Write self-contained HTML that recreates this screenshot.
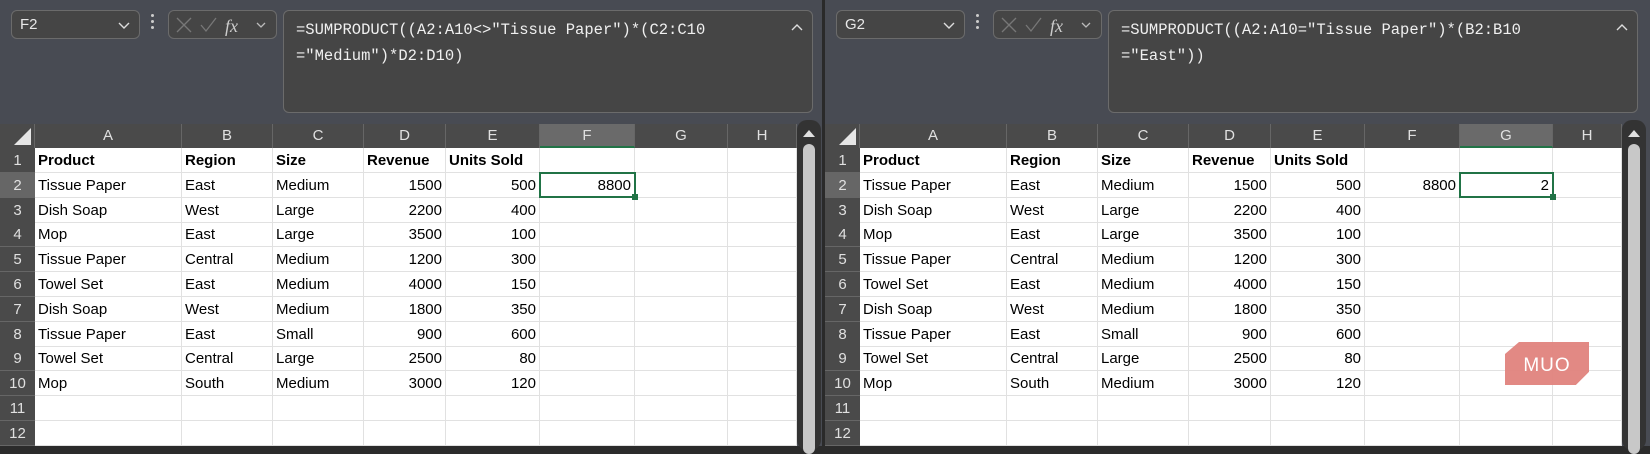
<!DOCTYPE html>
<html><head><meta charset="utf-8"><style>
*{margin:0;padding:0;box-sizing:border-box}
body{width:1650px;height:446px;background:#2b2b2b;position:relative;overflow:hidden;font-family:"Liberation Sans",sans-serif}
.panel{position:absolute;top:0;width:825px;height:446px;background:#484b53;overflow:hidden}
.nb{position:absolute;left:11px;top:10px;width:129px;height:29px;background:#454545;border:1px solid #6b6b6b;border-radius:6px;color:#e8e8e8;font-size:15px;padding:5px 0 0 8px}
.nb .ch{position:absolute;right:9px;top:6px}
.dots{position:absolute;left:151px;top:14px;width:3px}
.dots i{display:block;width:3px;height:3px;background:#ccc;border-radius:50%;margin-bottom:3px}
.fxb{position:absolute;left:168px;top:10px;width:109px;height:29px;background:#454545;border:1px solid #6b6b6b;border-radius:6px}
.fb{position:absolute;left:283px;top:10px;width:530px;height:103px;background:#454545;border:1px solid #6b6b6b;border-radius:6px;color:#f0f0f0;font-family:"Liberation Mono",monospace;font-size:15.5px;line-height:26px;padding:6px 0 0 12px;white-space:pre}
.fb .up{position:absolute;right:8px;top:4px}
.grid{position:absolute;left:0;top:124px;width:797px;height:322px;background:#fff}
.hdr{position:absolute;top:0;height:24px;background:#4a4a4a;color:#e0e0e0;font-size:15px;text-align:center;line-height:24px;border-right:1px solid #666}
.rh{position:absolute;left:0;width:35px;height:25px;background:#4a4a4a;color:#e0e0e0;font-size:15px;text-align:center;line-height:25px;border-bottom:1px solid #666}
.c{position:absolute;height:25px;line-height:25px;font-size:15px;color:#000;white-space:nowrap;padding:0 3px;border-right:1px solid #e1e1e1;border-bottom:1px solid #e1e1e1}
.r{text-align:right}
.b{font-weight:bold}
.sb{position:absolute;left:797px;top:120px;width:24px;height:330px;background:#333;border-radius:10px}
.sb .th{position:absolute;left:6px;top:24px;width:12px;height:310px;background:#c8c8c8;border-radius:6px}
.sel{position:absolute;border:2px solid #217346;height:26px}
.sel i{position:absolute;right:-4px;bottom:-4px;width:6px;height:6px;background:#217346}
</style></head><body>

<div class="panel" style="left:0"></div>
<div class="panel" style="left:825px"></div>
<div style="position:absolute;left:822px;top:0;width:3px;height:446px;background:#2a2a2a"></div>

<div id="L" style="position:absolute;left:0;top:0;width:825px;height:446px"></div>
<div id="R" style="position:absolute;left:825px;top:0;width:825px;height:446px"></div>

<script>
function build(el,name,f1,f2,sel,extraF){
 var h='';
 h+='<div class="nb">'+name+'<span class="ch"><svg width="12" height="8"><path d="M1 1l5 5 5-5" stroke="#ddd" fill="none" stroke-width="1.4"/></svg></span></div>';
 h+='<div class="dots"><i></i><i></i><i></i></div>';
 h+='<div class="fxb"><svg width="109" height="29"><path d="M8 7l14 14M22 7L8 21" stroke="#777" stroke-width="1.3" fill="none"/><path d="M32 14l5 6 10-13" stroke="#777" stroke-width="1.3" fill="none"/><text x="56" y="21" font-family="Liberation Serif" font-style="italic" font-size="18" fill="#ccc">fx</text><path d="M88 12l4 4 4-4" stroke="#bbb" stroke-width="1.3" fill="none"/></svg></div>';
 h+='<div class="fb">'+f1+'\n'+f2+'<span class="up"><svg width="14" height="10"><path d="M2 8l5-5 5 5" stroke="#ddd" fill="none" stroke-width="1.4"/></svg></span></div>';
 var cols=[['A',35,182],['B',182,273],['C',273,364],['D',364,446],['E',446,540],['F',540,635],['G',635,728],['H',728,797]];
 h+='<div class="grid">';
 h+='<div class="hdr" style="left:0;width:35px"><svg width="35" height="24"><path d="M31 4L31 21L14 21Z" fill="#e6e6e6"/></svg></div>';
 cols.forEach(function(c){var s=c[0]==sel;h+='<div class="hdr" style="left:'+c[1]+'px;width:'+(c[2]-c[1])+'px;'+(s?'background:#6a6a6a;border-bottom:2px solid #217346;':'')+'">'+c[0]+'</div>';});
 var data=[['Product','Region','Size','Revenue','Units Sold'],['Tissue Paper','East','Medium',1500,500],['Dish Soap','West','Large',2200,400],['Mop','East','Large',3500,100],['Tissue Paper','Central','Medium',1200,300],['Towel Set','East','Medium',4000,150],['Dish Soap','West','Medium',1800,350],['Tissue Paper','East','Small',900,600],['Towel Set','Central','Large',2500,80],['Mop','South','Medium',3000,120],['','','','',''],['','','','','']];
 for(var r=0;r<12;r++){
  var y=24+r*24.8;
  h+='<div class="rh" style="top:'+y+'px;'+(r==1?'background:#666;':'')+'">'+(r+1)+'</div>';
  for(var ci=0;ci<8;ci++){
   var c=cols[ci],v=ci<5?data[r][ci]:'';
   if(r==1&&extraF&&extraF[c[0]])v=extraF[c[0]];
   var cls='c'+(r==0&&ci<5?' b':'')+((typeof v=='number'||(r==1&&ci>=5))?' r':'');
   h+='<div class="'+cls+'" style="left:'+c[1]+'px;top:'+y+'px;width:'+(c[2]-c[1])+'px">'+v+'</div>';
  }
 }
 var sc=cols.filter(function(c){return c[0]==sel})[0];
 h+='<div class="sel" style="left:'+(sc[1]-1)+'px;top:'+(24+24.8-1)+'px;width:'+(sc[2]-sc[1]+2)+'px"><i></i></div>';
 h+='</div>';
 h+='<div class="sb"><svg width="24" height="20" style="position:absolute;top:3px;left:0"><path d="M6 14L12 7L18 14Z" fill="#e0e0e0"/></svg><div class="th"></div></div>';
 el.innerHTML=h;
}
build(document.getElementById('L'),'F2','=SUMPRODUCT((A2:A10&lt;&gt;"Tissue Paper")*(C2:C10','="Medium")*D2:D10)','F',{F:'8800'});
build(document.getElementById('R'),'G2','=SUMPRODUCT((A2:A10="Tissue Paper")*(B2:B10','="East"))','G',{F:'8800',G:'2'});
</script>

<div style="position:absolute;left:1505px;top:342px;width:84px;height:43px">
<svg width="84" height="43"><path d="M14 0H84V30L71 43H0V12Z" fill="#e0837d" opacity="0.95"/><path d="M84 30L71 43H84Z" fill="#fff"/><path d="M74 43L84 33" stroke="#fff" stroke-width="2"/><text x="42" y="29" text-anchor="middle" font-family="Liberation Sans" font-size="19" fill="#fff" letter-spacing="1">MUO</text></svg>
</div>
</body></html>
